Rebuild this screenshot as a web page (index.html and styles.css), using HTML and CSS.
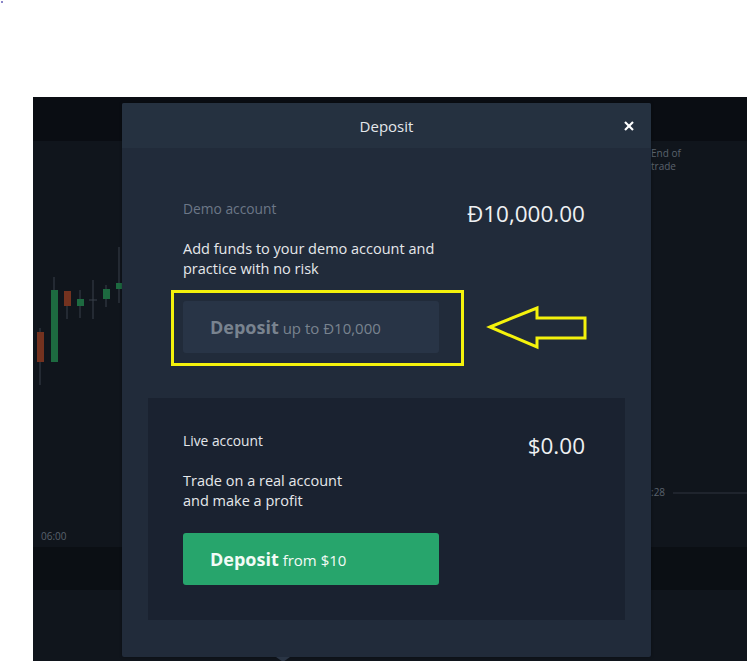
FILE: index.html
```html
<!DOCTYPE html>
<html>
  <head>
    <title>Deposit</title>
    <meta name="viewport" content="width=device-width, initial-scale=1.0" />
    <link rel="stylesheet" href="styles.css">
  </head>
  <body>
    <span class="corner-dot"></span>
    <div class="app">
      <div class="topbar"></div>
      <div class="chart"></div>
      <div class="axis"><span class="axis-label">06:00</span></div>
      <div class="band"></div>
      <div class="bottom"></div>

      <!-- chart drawing behind the modal -->
      <svg class="chart-canvas" width="714" height="564" viewBox="0 0 714 564">
        <!-- candles (coords relative to app) -->
        <g class="wick">
          <line x1="7" y1="231" x2="7" y2="288" />
          <line x1="21" y1="180" x2="21" y2="265" />
          <line x1="34" y1="194" x2="34" y2="222" />
          <line x1="47" y1="193" x2="47" y2="221" />
          <line x1="60" y1="183" x2="60" y2="222" />
          <line x1="56" y1="203" x2="64" y2="203" />
          <line x1="73" y1="188" x2="73" y2="210" />
          <line x1="86" y1="150" x2="86" y2="206" />
        </g>
        <rect class="red" x="4" y="235" width="7" height="30" />
        <rect class="green" x="18" y="193" width="7" height="72" />
        <rect class="red" x="31" y="194" width="7" height="15" />
        <rect class="green" x="44" y="202" width="7" height="7" />
        <rect class="green" x="70" y="192" width="7" height="10" />
        <rect class="green" x="83" y="186" width="7" height="6" />
        <line class="price-line" x1="640" y1="396" x2="714" y2="396" />
      </svg>
      <span class="end-label">End of</span>
      <span class="end-label second">trade</span>
      <span class="time-label">:28</span>

      <div class="modal">
        <div class="modal-header">
          <span class="modal-title">Deposit</span>
          <svg class="close" width="10" height="10" viewBox="0 0 10 10">
            <line x1="1" y1="1" x2="9" y2="9" />
            <line x1="9" y1="1" x2="1" y2="9" />
          </svg>
        </div>
        <div class="modal-body">
          <div class="account demo">
            <div class="account-row">
              <span class="account-label">Demo account</span>
              <span class="account-amount">Đ10,000.00</span>
            </div>
            <p class="account-text">Add funds to your demo account and<br>practice with no risk</p>
            <button class="deposit-button demo-button">
              <b>Deposit</b> up to Đ10,000
            </button>
          </div>
          <div class="account live">
            <div class="account-row">
              <span class="account-label light">Live account</span>
              <span class="account-amount">$0.00</span>
            </div>
            <p class="account-text">Trade on a real account<br>and make a profit</p>
            <button class="deposit-button live-button">
              <b>Deposit</b> from $10
            </button>
          </div>
        </div>
        <span class="pointer"></span>

        <!-- yellow annotation -->
        <div class="highlight"></div>
        <svg class="arrow" width="106" height="50" viewBox="0 0 106 50">
          <polygon points="4,24 51,5 51,15 99,15 99,35 51,35 51,44" />
        </svg>
      </div>
    </div>
  </body>
</html>
```

FILE: styles.css
```css
body {
  margin: 0;
  background-color: #fff;
  font-family: "Open Sans", "Liberation Sans", sans-serif;
}

.corner-dot {
  position: absolute;
  left: 1px;
  top: 1px;
  width: 2px;
  height: 2px;
  background-color: #8a86c8;
}

.app {
  position: relative;
  margin: 97px 0 0 33px;
  width: 714px;
  height: 564px;
  background-color: #10151c;
  overflow: hidden;
  display: flex;
  flex-direction: column;
}

.topbar {
  height: 44px;
  background-color: #0a0d13;
}

.chart {
  height: 354px;
}

.axis {
  height: 52px;
  padding: 28px 0 0 8px;
  box-sizing: border-box;
}

.axis-label,
.time-label,
.end-label {
  font-size: 10px;
  line-height: 12px;
  color: #5a626d;
}

.band {
  height: 43px;
  background-color: #0b0f14;
}

.bottom {
  flex: 1;
}

.chart-canvas {
  position: absolute;
  left: 0;
  top: 0;
}

.wick line {
  stroke: #39414a;
  stroke-width: 1;
}

.red {
  fill: #74321f;
}

.green {
  fill: #1d6a40;
}

.price-line {
  stroke: #2e353e;
  stroke-width: 1;
}

.end-label {
  position: absolute;
  left: 618px;
  top: 50px;
}

.end-label.second {
  top: 63px;
}

.time-label {
  position: absolute;
  left: 618px;
  top: 389px;
}

/* modal */
.modal {
  position: absolute;
  left: 89px;
  top: 6px;
  width: 529px;
  height: 554px;
  background-color: #212b3a;
  border-radius: 2px;
  display: flex;
  flex-direction: column;
  box-shadow: 0 0 3px rgba(0, 0, 0, 0.4);
}

.modal-header {
  position: relative;
  height: 45px;
  background-color: #253140;
  border-radius: 2px 2px 0 0;
  display: flex;
  align-items: center;
  justify-content: center;
}

.modal-title {
  font-size: 15px;
  color: #e4e7eb;
}

.close {
  position: absolute;
  right: 17px;
  top: 18px;
}

.close line {
  stroke: #fff;
  stroke-width: 2.2;
}

.modal-body {
  padding: 18px 26px 36px;
  display: flex;
  flex-direction: column;
  gap: 10px;
}

.account {
  padding: 34px 40px 35px 35px;
}

.account.live {
  background-color: #1a2230;
}

.account-row {
  display: flex;
  justify-content: space-between;
  align-items: flex-start;
  height: 28px;
}

.account-label {
  font-size: 13.8px;
  line-height: 18px;
  color: #6c7787;
}

.account-label.light {
  color: #e4e7eb;
}

.account-amount {
  font-size: 22.5px;
  line-height: 28px;
  color: #eef0f2;
}

.account-text {
  margin: 11px 0 22px;
  font-size: 14.5px;
  line-height: 20px;
  color: #e6e8eb;
}

.deposit-button {
  display: block;
  width: 256px;
  height: 52px;
  padding: 0 0 0 27px;
  border: none;
  border-radius: 3px;
  text-align: left;
  font-family: inherit;
  font-size: 15px;
}

.deposit-button b {
  font-size: 18px;
  font-weight: 700;
}

.demo-button {
  background-color: #283446;
  color: #79838f;
}

.live-button {
  background-color: #27a56c;
  color: #f2fbf6;
}

.pointer {
  position: absolute;
  left: 154px;
  bottom: -5px;
  width: 0;
  height: 0;
  border-left: 7px solid transparent;
  border-right: 7px solid transparent;
  border-top: 5px solid #2a3545;
}

.highlight {
  position: absolute;
  left: 49px;
  top: 187px;
  width: 293px;
  height: 76px;
  border: 3px solid #f4f20c;
  box-sizing: border-box;
}

.arrow {
  position: absolute;
  left: 364px;
  top: 200px;
}

.arrow polygon {
  fill: none;
  stroke: #f4f20c;
  stroke-width: 3;
}
```
